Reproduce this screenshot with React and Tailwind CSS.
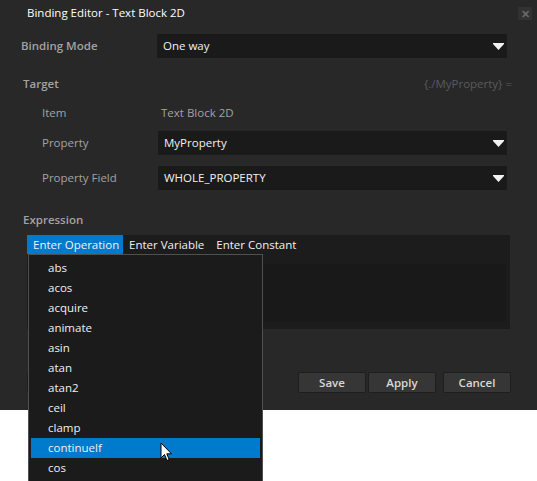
import React from 'react';

const font = { fontFamily: '"Open Sans", "Noto Sans", "Liberation Sans", sans-serif' };

const Arrow = () => (
  <svg width="11" height="7" viewBox="0 0 11 7" className="shrink-0">
    <path d="M0 0 H11 V1 L5.5 7 L0 1 Z" fill="#f2f2f2" />
  </svg>
);

const Select = ({ value }) => (
  <div className="flex-1 h-[24px] bg-[#1a1a1a] flex items-center justify-between pl-[6px] pr-[3px] text-[11.5px] text-[#f2f2f2]">
    <span>{value}</span>
    <Arrow />
  </div>
);

const Cursor = () => (
  <svg width="13" height="20" viewBox="0 0 13 20">
    <path
      d="M1 1 L1 16 L4.5 12.5 L7 18.5 L9.2 17.6 L6.8 11.8 L11.5 11.8 Z"
      fill="#ffffff"
      stroke="#000000"
      strokeWidth="1"
      strokeLinejoin="round"
    />
  </svg>
);

const operations = ['abs', 'acos', 'acquire', 'animate', 'asin', 'atan', 'atan2', 'ceil', 'clamp', 'continuelf', 'cos'];

const App = () => {
  return (
    <div className="relative w-[537px] h-[481px] bg-white overflow-hidden" style={font}>
      {/* Dialog */}
      <div className="h-[410px] bg-[#282828] flex flex-col">
        {/* Title bar */}
        <div className="h-[26px] flex items-center justify-between pl-[27px] pr-[5px]">
          <span className="text-[11.5px] text-white">Binding Editor - Text Block 2D</span>
          <div className="w-[14px] h-[13px] bg-[#323232] flex items-center justify-center text-[#6a6a6a] text-[11px] font-bold leading-none">
            ✕
          </div>
        </div>

        {/* Binding mode */}
        <div className="mt-[8px] flex items-center pl-[21px] pr-[30px]">
          <span className="w-[136px] text-[11.5px] font-semibold text-[#a3a3a3]">Binding Mode</span>
          <Select value="One way" />
        </div>

        {/* Target */}
        <div className="mt-[16px] h-[20px] flex items-center justify-between pl-[23px] pr-[25px]">
          <span className="text-[11.5px] font-semibold text-[#a3a3a3]">Target</span>
          <span className="text-[11.5px] text-[#5a5a5a]">{'{./MyProperty} ='}</span>
        </div>

        <div className="mt-[9px] h-[20px] flex items-center pl-[42px]">
          <span className="w-[119px] text-[11.5px] text-[#a3a3a3]">Item</span>
          <span className="text-[11.5px] text-[#a3a3a3]">Text Block 2D</span>
        </div>

        <div className="mt-[8px] flex items-center pl-[42px] pr-[30px]">
          <span className="w-[116px] text-[11.5px] text-[#a3a3a3]">Property</span>
          <Select value="MyProperty" />
        </div>

        <div className="mt-[11px] flex items-center pl-[42px] pr-[30px]">
          <span className="w-[116px] text-[11.5px] text-[#a3a3a3]">Property Field</span>
          <Select value="WHOLE_PROPERTY" />
        </div>

        {/* Expression */}
        <div className="mt-[20px] h-[20px] flex items-center pl-[23px]">
          <span className="text-[11.5px] font-semibold text-[#a3a3a3]">Expression</span>
        </div>

        <div className="mt-[5px] mx-[27px] h-[94px] bg-[#1c1c1c] flex flex-col">
          <div className="h-[19px] flex items-center text-[11.5px] text-[#f2f2f2]">
            <span className="h-full w-[96px] bg-[#007acc] flex items-center pl-[6px] whitespace-nowrap">Enter Operation</span>
            <span className="pl-[6px]">Enter Variable</span>
            <span className="pl-[12px]">Enter Constant</span>
          </div>
          <div className="mt-[10px] mr-[4px] h-[58px] bg-[#191919]" />
        </div>

        {/* Buttons */}
        <div className="mt-[43px] flex items-center pl-[27px] pr-[26px]">
          {/* partly hidden behind the dropdown */}
          <div className="w-[68px] h-[21px] rounded-[2px] bg-[#363636] border border-[#1e1e1e]" />
          <div className="flex-1" />
          <button className="w-[68px] h-[21px] rounded-[2px] bg-[#363636] border border-[#1e1e1e] text-[11.5px] font-semibold text-[#d8d8d8]">
            Save
          </button>
          <button className="ml-[2px] w-[68px] h-[21px] rounded-[2px] bg-[#363636] border border-[#1e1e1e] text-[11.5px] font-semibold text-[#d8d8d8]">
            Apply
          </button>
          <button className="ml-[7px] w-[68px] h-[21px] rounded-[2px] bg-[#363636] border border-[#1e1e1e] text-[11.5px] font-semibold text-[#d8d8d8]">
            Cancel
          </button>
        </div>
      </div>

      {/* Operation dropdown */}
      <div className="absolute left-[28px] top-[254px] w-[235px] h-[240px] bg-[#1b1b1b] border border-[#505050] pt-[3px] px-[2px]">
        {operations.map((op) => (
          <div
            key={op}
            className={`h-[20px] flex items-center pl-[17px] text-[11.5px] text-[#f0f0f0] ${op === 'continuelf' ? 'bg-[#007acc]' : ''}`}
          >
            {op}
          </div>
        ))}
      </div>

      {/* Mouse pointer */}
      <div className="absolute left-[160px] top-[442px]">
        <Cursor />
      </div>
    </div>
  );
};

export default App;
